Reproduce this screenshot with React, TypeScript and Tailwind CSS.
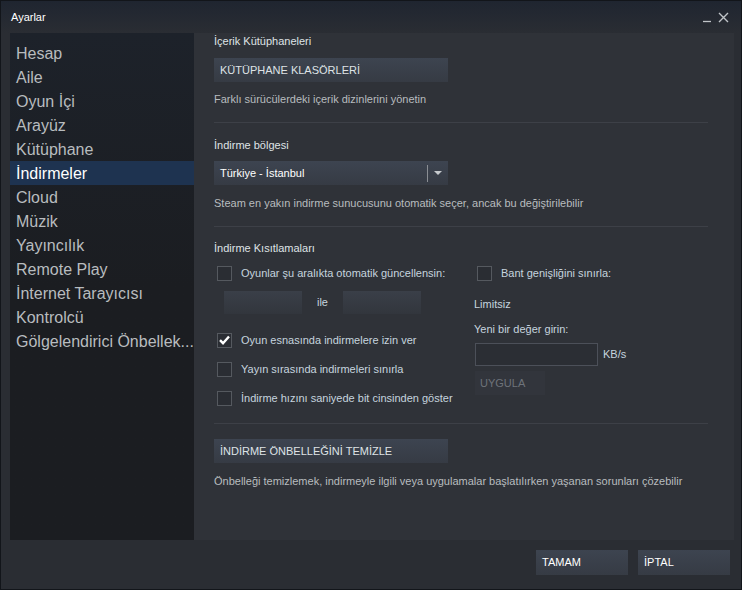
import React from 'react';

const font = { fontFamily: '"Liberation Sans", Arial, sans-serif' };

const menu = [
    'Hesap',
    'Aile',
    'Oyun İçi',
    'Arayüz',
    'Kütüphane',
    'İndirmeler',
    'Cloud',
    'Müzik',
    'Yayıncılık',
    'Remote Play',
    'İnternet Tarayıcısı',
    'Kontrolcü',
    'Gölgelendirici Önbellek...',
];

const Checkbox: React.FC<{ checked?: boolean }> = ({ checked }) => (
    <span className="flex h-[15px] w-[15px] shrink-0 items-center justify-center border border-[#55595f] bg-[#2a2d33]">
        {checked && (
            <svg width="11" height="10" viewBox="0 0 11 10">
                <path d="M1 5.2 L4 8.2 L10 1.5" fill="none" stroke="#ffffff" strokeWidth="2.4" />
            </svg>
        )}
    </span>
);

const CheckRow: React.FC<{ label: string; checked?: boolean; className?: string }> = ({ label, checked, className }) => (
    <div className={`flex h-[16px] items-center pl-[3px] ${className || ''}`}>
        <Checkbox checked={checked} />
        <span className="ml-[9px] text-[11px] leading-[16px] text-[#c6d4df]">{label}</span>
    </div>
);

const Button: React.FC<{ label: string; className?: string }> = ({ label, className }) => (
    <div
        className={`flex h-[24px] items-center bg-gradient-to-b from-[#3d4450] to-[#363b44] px-[6px] text-[11px] text-[#dfe3e6] ${className || ''}`}
    >
        {label}
    </div>
);

const Separator: React.FC = () => <div className="h-px w-[494px] bg-[#3d4047]" />;

export default function App() {
    return (
        <div
            style={font}
            className="flex h-[590px] w-[742px] flex-col border border-[#12151a] bg-[#2a2d33] text-[#c6d4df]"
        >
            {/* başlık */}
            <div className="flex h-[32px] shrink-0 items-center justify-between bg-gradient-to-b from-[#1f2530] to-[#2a2d33] pl-[10px] pr-[12px]">
                <span className="text-[11px] text-[#ffffff]">Ayarlar</span>
                <div className="flex items-center gap-[6px]">
                    <svg width="10" height="12" viewBox="0 0 10 12">
                        <path d="M1 10.5 H9" stroke="#c0c4c8" strokeWidth="1.3" />
                    </svg>
                    <svg width="11" height="11" viewBox="0 0 11 11">
                        <path d="M1 1 L10 10 M10 1 L1 10" stroke="#c0c4c8" strokeWidth="1.4" />
                    </svg>
                </div>
            </div>

            <div className="flex h-[507px] shrink-0 pl-[9px] pr-[7px]">
                {/* kenar menü */}
                <div className="w-[184px] shrink-0 bg-gradient-to-b from-[#1d222a] via-[#1b1d21] to-[#1b1d21] pt-[8px]">
                    {menu.map((item) => (
                        <div
                            key={item}
                            className={`h-[24px] truncate pl-[6px] pt-px text-[16px] leading-[24px] ${
                                item === 'İndirmeler' ? 'bg-[#1e3350] text-[#ffffff]' : 'text-[#b8bcbf]'
                            }`}
                        >
                            {item}
                        </div>
                    ))}
                </div>

                {/* içerik */}
                <div className="flex-1 bg-[#2f3238] pl-[20px]">
                    <div className="text-[11px] leading-[16px] text-[#dfe3e6]">İçerik Kütüphaneleri</div>
                    <Button label="KÜTÜPHANE KLASÖRLERİ" className="mt-[9px] w-[234px]" />
                    <div className="mt-[9px] text-[11px] leading-[16px] text-[#b8bcbf]">
                        Farklı sürücülerdeki içerik dizinlerini yönetin
                    </div>
                    <div className="mt-[15px]">
                        <Separator />
                    </div>

                    <div className="mt-[14px] text-[11px] leading-[16px] text-[#dfe3e6]">İndirme bölgesi</div>
                    <div className="mt-[8px] flex h-[24px] w-[234px] items-center bg-gradient-to-b from-[#3d4450] to-[#363b44] pl-[6px]">
                        <span className="flex-1 text-[11px] text-[#ffffff]">Türkiye - İstanbul</span>
                        <div className="h-[17px] w-px bg-[#8a8e94]" />
                        <svg width="20" height="8" viewBox="0 0 20 8">
                            <path d="M6 2 H14 L10 6 Z" fill="#c6cacd" />
                        </svg>
                    </div>
                    <div className="mt-[10px] text-[11px] leading-[16px] text-[#b8bcbf]">
                        Steam en yakın indirme sunucusunu otomatik seçer, ancak bu değiştirilebilir
                    </div>
                    <div className="mt-[15px]">
                        <Separator />
                    </div>

                    <div className="mt-[13px] text-[11px] leading-[16px] text-[#dfe3e6]">İndirme Kısıtlamaları</div>
                    <div className="mt-[9px] flex">
                        <div className="w-[260px] shrink-0">
                            <CheckRow label="Oyunlar şu aralıkta otomatik güncellensin:" />
                            <div className="ml-[10px] mt-[10px] flex h-[23px] items-center">
                                <div className="h-[23px] w-[78px] bg-gradient-to-b from-[#3a3f48] to-[#32363d]" />
                                <span className="w-[41px] text-center text-[11px] text-[#c6d4df]">ile</span>
                                <div className="h-[23px] w-[78px] bg-gradient-to-b from-[#3a3f48] to-[#32363d]" />
                            </div>
                            <CheckRow label="Oyun esnasında indirmelere izin ver" checked className="mt-[18px]" />
                            <CheckRow label="Yayın sırasında indirmeleri sınırla" className="mt-[13px]" />
                            <CheckRow label="İndirme hızını saniyede bit cinsinden göster" className="mt-[13px]" />
                        </div>
                        <div>
                            <CheckRow label="Bant genişliğini sınırla:" />
                            <div className="mt-[15px] text-[11px] leading-[16px] text-[#c6d4df]">Limitsiz</div>
                            <div className="mt-[9px] text-[11px] leading-[16px] text-[#c6d4df]">Yeni bir değer girin:</div>
                            <div className="ml-px mt-[6px] flex items-center">
                                <div className="h-[23px] w-[123px] border border-[#4c5059] bg-[#2b2e34]" />
                                <span className="ml-[5px] text-[11px] text-[#c6d4df]">KB/s</span>
                            </div>
                            <div className="ml-px mt-[5px] flex h-[24px] w-[70px] items-center bg-[#32353c] pl-[5px] text-[11px] text-[#6e737a]">
                                UYGULA
                            </div>
                        </div>
                    </div>
                    <div className="mt-[17px]">
                        <Separator />
                    </div>

                    <Button label="İNDİRME ÖNBELLEĞİNİ TEMİZLE" className="mt-[15px] w-[234px]" />
                    <div className="mt-[10px] text-[11px] leading-[16px] text-[#b8bcbf]">
                        Önbelleği temizlemek, indirmeyle ilgili veya uygulamalar başlatılırken yaşanan sorunları çözebilir
                    </div>
                </div>
            </div>

            {/* alt butonlar */}
            <div className="flex flex-1 items-start justify-end gap-[10px] pr-[11px] pt-[10px]">
                <Button label="TAMAM" className="h-[25px] w-[92px] text-[#ffffff]" />
                <Button label="İPTAL" className="h-[25px] w-[92px] text-[#ffffff]" />
            </div>
        </div>
    );
}
